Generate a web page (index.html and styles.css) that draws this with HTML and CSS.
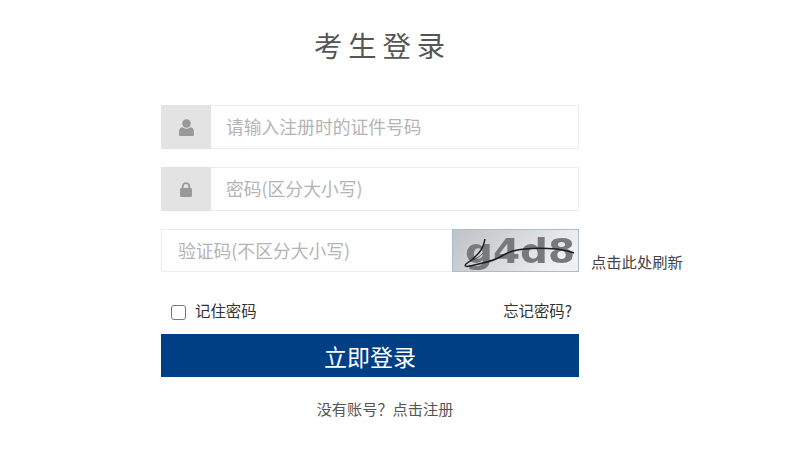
FILE: index.html
```html
<!DOCTYPE html>
<html lang="zh-CN">
<head>
<meta charset="utf-8">
<title>考生登录</title>
<link rel="stylesheet" href="styles.css">
</head>
<body>
<main class="page">
  <h1 class="title">考生登录</h1>
  <form class="form">
    <div class="field">
      <span class="addon">
        <svg class="icon" viewBox="0 0 14 16" width="15" height="17"><circle cx="7" cy="4.200" r="4"/><path d="M0 15v-3.500C0 9.300 1.800 7.800 3.600 7.800c1 .9 2.100 1.400 3.400 1.400s2.400-.5 3.400-1.400C12.200 7.800 14 9.300 14 11.500V15c0 .6-.4 1-1 1H1c-.6 0-1-.4-1-1z"/></svg>
      </span>
      <input class="input" type="text" placeholder="请输入注册时的证件号码">
    </div>
    <div class="field">
      <span class="addon">
        <svg class="icon" viewBox="0 0 12 15" width="12" height="15"><path d="M1.800 6.500V4.500a4.200 4.200 0 0 1 8.400 0v2H8.400v-2a2.400 2.400 0 0 0-4.800 0v2z"/><rect x="0" y="6" width="12" height="9" rx="1.200"/></svg>
      </span>
      <input class="input" type="text" placeholder="密码(区分大小写)">
    </div>
    <div class="captcha-row">
      <div class="field captcha-field">
        <input class="input captcha-input" type="text" placeholder="验证码(不区分大小写)">
        <div class="captcha">
          <svg viewBox="0 0 125 41" width="125" height="41">
            <defs>
              <linearGradient id="cg" x1="0" y1="0" x2="1" y2="0.300">
                <stop offset="0" stop-color="#bfc3c7"/>
                <stop offset="0.500" stop-color="#d4d6d8"/>
                <stop offset="1" stop-color="#eef0f2"/>
              </linearGradient>
              <filter id="soft"><feGaussianBlur stdDeviation="0.700"/></filter>
            </defs>
            <rect width="125" height="41" fill="url(#cg)"/>
            <text class="captcha-text" x="12" y="33" textLength="110" lengthAdjust="spacingAndGlyphs" filter="url(#soft)">g4d8</text>
            <path class="captcha-line" d="M32 9C31 16 28 24 13 34C11 36 13 37 17 36C26 34 36 32 43 29C50 26 52 23 60 21C72 18 90 18 104 19C110 20 116 21 121 23"/>
            <path class="captcha-thin" d="M14 33C22 29 27 27 30 23"/>
          </svg>
        </div>
      </div>
      <a class="refresh">点击此处刷新</a>
    </div>
    <div class="options">
      <label class="remember"><span class="checkbox"></span><span>记住密码</span></label>
      <a class="forgot">忘记密码?</a>
    </div>
    <button class="submit" type="button">立即登录</button>
    <p class="register">没有账号？点击注册</p>
  </form>
</main>
</body>
</html>
```

FILE: styles.css
```css
* { box-sizing: border-box; }
html, body { margin: 0; padding: 0; background: #fff; }
body {
  width: 800px;
  height: 450px;
  overflow: hidden;
  font-family: "Noto Sans CJK SC", "Noto Sans", sans-serif;
  font-weight: 400;
  color: #333;
}
.page { padding: 25px 0 0 161px; }
.title {
  margin: 0 0 40px;
  width: 443px;
  height: 40px;
  line-height: 40px;
  font-size: 28.300px;
  font-weight: 400;
  letter-spacing: 6px;
  text-align: center;
  color: #555;
}
.form { width: 418px; display: flex; flex-direction: column; }
.field {
  display: flex;
  width: 418px;
  height: 44px;
  margin-bottom: 18px;
  border: 1px solid #ececec;
  background: #fff;
}
.addon {
  flex: 0 0 50px;
  margin: -1px 0 -1px -1px;
  background: #e3e3e3;
  display: flex;
  align-items: center;
  justify-content: center;
}
.icon { fill: #999; display: block; }
.input {
  flex: 1;
  min-width: 0;
  border: 0;
  outline: 0;
  padding: 0 0 2px 15px;
  font: 400 17.800px "Noto Sans CJK SC", sans-serif;
  background: transparent;
}
.input::placeholder { color: #b4b4b4; opacity: 1; }
.captcha-row { position: relative; height: 43px; margin-bottom: 26px; }
.captcha-field { height: 43px; margin: 0; }
.captcha-input { padding-left: 16px; }
.captcha { flex: 0 0 127px; margin: -1px -1px -1px 0; height: 43px; border: 1px solid #a8bdd0; overflow: hidden; }
.captcha svg { display: block; }
.captcha-text {
  font-family: "DejaVu Sans", sans-serif;
  font-weight: 700;
  font-size: 33px;
  fill: #78797a;
}
.captcha-line { fill: none; stroke: #1c1c1c; stroke-width: 1.500; }
.captcha-thin { fill: none; stroke: #333; stroke-width: 0.800; }
.refresh {
  position: absolute;
  left: 430px;
  top: 20px;
  font-size: 15.300px;
  line-height: 24px;
  white-space: nowrap;
  color: #444;
}
.options {
  display: flex;
  justify-content: space-between;
  align-items: center;
  height: 24px;
  padding: 0 7px 0 10px;
  margin-bottom: 12px;
  font-size: 15.400px;
  line-height: 24px;
  color: #333;
}
.remember { display: flex; align-items: center; gap: 9px; }
.checkbox {
  width: 15px;
  height: 15px;
  border: 1.500px solid #777;
  border-radius: 3px;
  background: #fff;
  margin-top: 4px;
}
.submit {
  height: 43px;
  border: 0;
  background: #003f84;
  color: #fff;
  font: 400 23px "Noto Sans CJK SC", sans-serif;
  padding: 0;
  margin-bottom: 20px;
}
.register {
  margin: 0;
  text-align: center;
  font-size: 15.200px;
  line-height: 22px;
  color: #555;
  padding-left: 30px;
}
```
